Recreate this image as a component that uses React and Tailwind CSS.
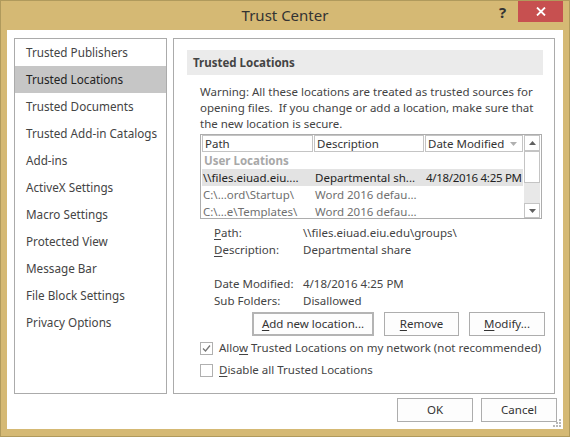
import React from 'react';

const NAV = [
  'Trusted Publishers',
  'Trusted Locations',
  'Trusted Documents',
  'Trusted Add-in Catalogs',
  'Add-ins',
  'ActiveX Settings',
  'Macro Settings',
  'Protected View',
  'Message Bar',
  'File Block Settings',
  'Privacy Options',
];

const ROWS = [
  { path: '\\\\files.eiuad.eiu....', desc: 'Departmental sh...', date: '4/18/2016 4:25 PM', sel: true },
  { path: 'C:\\...ord\\Startup\\', desc: 'Word 2016 defau...', date: '' },
  { path: 'C:\\...e\\Templates\\', desc: 'Word 2016 defau...', date: '' },
];

function U({ children }) {
  return <span className="underline underline-offset-[2px]">{children}</span>;
}

function Btn({ children, w, primary }) {
  return (
    <button
      className={`h-[24px] ${w} bg-[#fdfdfd] text-[#333] flex items-center justify-center whitespace-nowrap ${primary ? 'border-2 border-[#b4b4b4]' : 'border border-[#adadad]'}`}
    >
      {children}
    </button>
  );
}

function Check({ checked, children }) {
  return (
    <div className="h-[16px] flex items-center whitespace-nowrap">
      <span className="w-[13px] h-[13px] shrink-0 border border-[#b0b0b0] bg-white flex items-center justify-center">
        {checked && (
          <svg width="9" height="9" viewBox="0 0 9 9">
            <path d="M1 4.5 L3.5 7 L8 1.5" fill="none" stroke="#777" strokeWidth="1.3" />
          </svg>
        )}
      </span>
      <span className="ml-[6px] text-[#444]">{children}</span>
    </div>
  );
}

function Arrow({ up }) {
  return (
    <svg width="7" height="4" viewBox="0 0 7 4">
      <path d={up ? 'M0 4 L3.5 0 L7 4 Z' : 'M0 0 L3.5 4 L7 0 Z'} fill="#606060" />
    </svg>
  );
}

function LocationTable() {
  return (
    <div className="w-[342px] h-[85px] border border-[#adadad] flex overflow-hidden">
      <div className="w-[322px] pl-[1px] flex flex-col">
        <div className="h-[17px] flex text-[#333] shrink-0">
          <div className="w-[111px] border border-[#c4c4c4] pl-[2px] leading-[15px]">Path</div>
          <div className="w-[110px] ml-[1px] border border-[#c4c4c4] pl-[2px] leading-[15px]">Description</div>
          <div className="w-[98px] ml-[1px] border border-[#c4c4c4] pl-[2px] leading-[15px] flex items-center justify-between pr-[5px]">
            <span>Date Modified</span>
            <svg width="7" height="4" viewBox="0 0 7 4"><path d="M0 0 L3.5 4 L7 0 Z" fill="#b0b0b0" /></svg>
          </div>
        </div>
        <div className="h-[17px] leading-[17px] pl-[2px] font-bold text-[#a8a8a8]">User Locations</div>
        {ROWS.map((r) => (
          <div key={r.path} className={`h-[17px] leading-[17px] flex shrink-0 ${r.sel ? 'bg-[#e3e3e3] text-[#222]' : 'text-[#707070]'}`}>
            <span className="w-[112px] pl-[1px] whitespace-nowrap overflow-hidden">{r.path}</span>
            <span className="w-[111px] pl-[1px] whitespace-nowrap overflow-hidden">{r.desc}</span>
            <span className="w-[98px] pl-[1px] whitespace-nowrap tracking-[-0.3px]">{r.date}</span>
          </div>
        ))}
      </div>
      <div className="w-[16px] ml-[1px] flex flex-col">
        <div className="h-[16px] border border-[#c4c4c4] flex items-center justify-center shrink-0"><Arrow up /></div>
        <div className="h-[32px] border border-[#c4c4c4] bg-white shrink-0" />
        <div className="flex-1 bg-[#e8e8e8]" />
        <div className="h-[15px] border border-[#c4c4c4] flex items-center justify-center shrink-0"><Arrow /></div>
      </div>
    </div>
  );
}

export default function App() {
  return (
    <div className="w-[570px] h-[437px] bg-[#d5b974] border border-[#b09a5c] flex flex-col font-['Segoe_UI','Noto_Sans',sans-serif] text-[11.5px] text-[#444] select-none">
      {/* title bar */}
      <div className="h-[29px] relative flex items-center justify-center shrink-0">
        <span className="text-[15px] text-[#333]">Trust Center</span>
        <span className="absolute left-[498px] top-[2px] text-[15px] font-bold text-[#333] leading-[18px]">?</span>
        <div className="absolute right-[6px] top-0 w-[45px] h-[21px] bg-[#c75050] flex items-center justify-center">
          <svg width="10" height="9" viewBox="0 0 10 9">
            <path d="M1 0.5 L9 8.5 M9 0.5 L1 8.5" stroke="#fff" strokeWidth="1.8" />
          </svg>
        </div>
      </div>

      {/* client */}
      <div className="mx-[6px] h-[399px] bg-white flex flex-col relative shrink-0">
        <div className="flex pt-[8px] pl-[7px]">
          {/* nav */}
          <div className="w-[153px] h-[356px] border border-[#ababab] flex flex-col text-[11.7px]">
            {NAV.map((n) => (
              <div
                key={n}
                className={`h-[27px] leading-[27px] pl-[11px] whitespace-nowrap ${n === 'Trusted Locations' ? 'bg-[#c6c6c6] text-[#222]' : 'text-[#444]'}`}
              >
                {n}
              </div>
            ))}
          </div>

          {/* right panel */}
          <div className="ml-[6px] w-[382px] h-[356px] border border-[#ababab] pt-[11px] pl-[13px] flex flex-col">
            <div className="w-[356px] h-[25px] bg-[#ebebeb] pl-[6px] leading-[25px] font-bold text-[#444]">Trusted Locations</div>
            <div className="ml-[13px] flex flex-col">
              <div className="mt-[9px] leading-[16px] text-[#444] whitespace-nowrap">
                <div>Warning: All these locations are treated as trusted sources for</div>
                <div>opening files.&nbsp; If you change or add a location, make sure that</div>
                <div>the new location is secure.</div>
              </div>
              <div className="mt-[2px]">
                <LocationTable />
              </div>
              <div className="mt-[5px] ml-[14px] leading-[17px] text-[#444]">
                <div className="flex h-[17px]"><span className="w-[89px]"><U>P</U>ath:</span><span>\\files.eiuad.eiu.edu\groups\</span></div>
                <div className="flex h-[17px]"><span className="w-[89px]"><U>D</U>escription:</span><span>Departmental share</span></div>
                <div className="h-[17px]" />
                <div className="flex h-[17px]"><span className="w-[89px]">Date Modified:</span><span>4/18/2016 4:25 PM</span></div>
                <div className="flex h-[17px]"><span className="w-[89px]">Sub Folders:</span><span>Disallowed</span></div>
              </div>
              <div className="mt-[3px] ml-[52px] flex gap-[10px]">
                <Btn w="w-[122px]" primary><U>A</U>dd new location...</Btn>
                <Btn w="w-[75px]"><U>R</U>emove</Btn>
                <Btn w="w-[76px]"><U>M</U>odify...</Btn>
              </div>
              <div className="mt-[4px] flex flex-col gap-[6px]">
                <Check checked>Allo<U>w</U> Trusted Locations on my network (not recommended)</Check>
                <Check><U>D</U>isable all Trusted Locations</Check>
              </div>
            </div>
          </div>
        </div>

        {/* bottom buttons */}
        <div className="mt-[4px] mr-[6px] flex justify-end gap-[8px]">
          <button className="w-[76px] h-[24px] border border-[#adadad] bg-[#fdfdfd] text-[#333]">OK</button>
          <button className="w-[76px] h-[24px] border border-[#adadad] bg-[#fdfdfd] text-[#333]">Cancel</button>
        </div>

        {/* resize grip */}
        <svg className="absolute right-[1px] bottom-[1px]" width="9" height="9" viewBox="0 0 9 9">
          <rect x="6" y="0" width="2" height="2" fill="#b8b8b8" />
          <rect x="3" y="3" width="2" height="2" fill="#b8b8b8" />
          <rect x="6" y="3" width="2" height="2" fill="#b8b8b8" />
          <rect x="0" y="6" width="2" height="2" fill="#b8b8b8" />
          <rect x="3" y="6" width="2" height="2" fill="#b8b8b8" />
          <rect x="6" y="6" width="2" height="2" fill="#b8b8b8" />
        </svg>
      </div>
    </div>
  );
}
